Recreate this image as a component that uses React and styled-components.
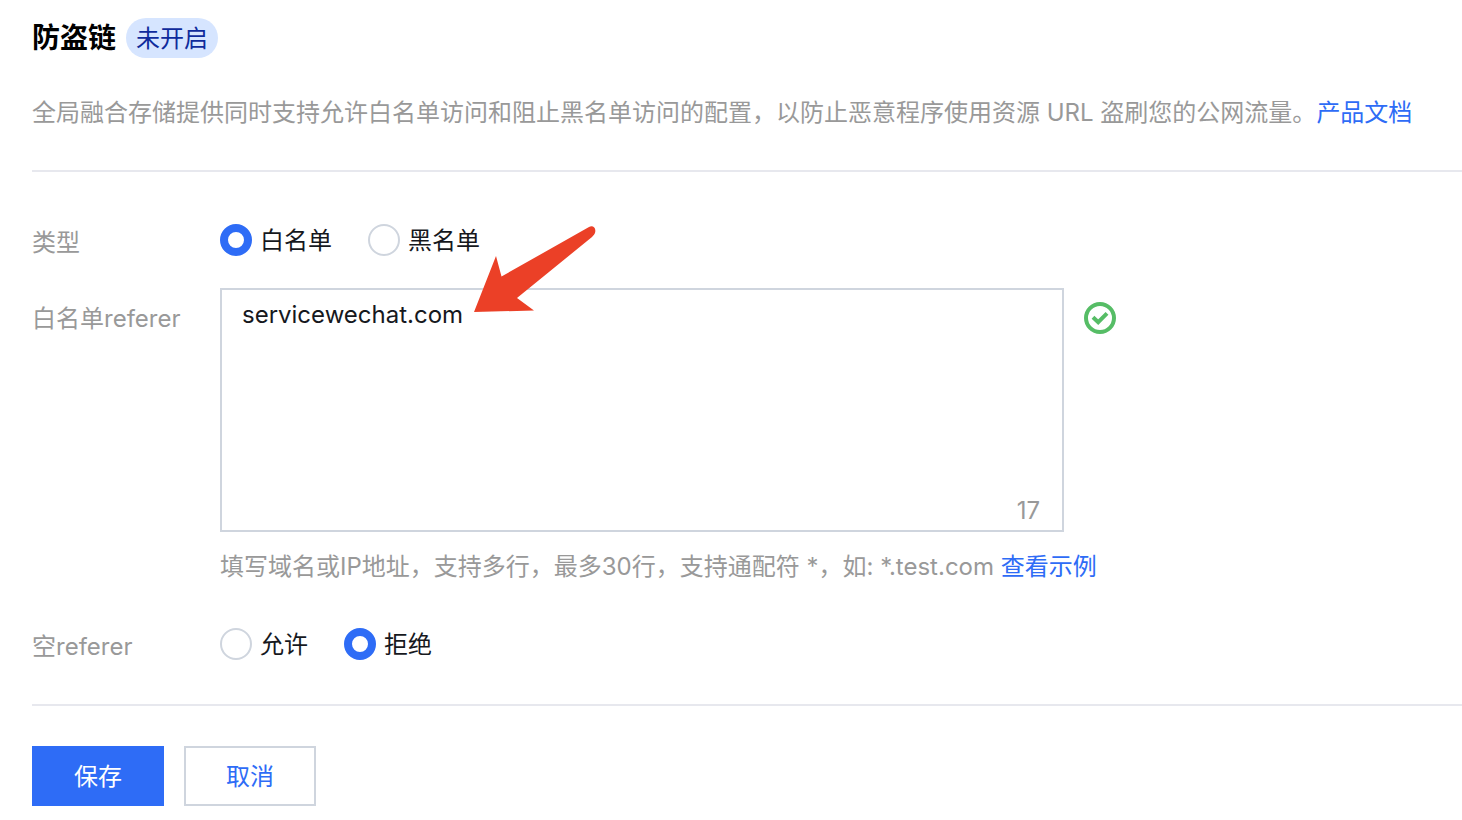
import React, { useState } from 'react';
import styled, { createGlobalStyle } from 'styled-components';

const GlobalStyle = createGlobalStyle`
  *, *::before, *::after { box-sizing: border-box; }
  body {
    margin: 0;
    background: #fff;
    color: #16181d;
    font-family: Inter, "Noto Sans CJK SC", sans-serif;
    font-size: 24px;
    line-height: 38px;
  }
`;

const Page = styled.main`
  padding: 18px 0 14px 32px;
`;

const Header = styled.header`
  display: flex;
  align-items: center;
  gap: 10px;
`;

const Title = styled.h1`
  margin: 0;
  font-size: 28px;
  line-height: 40px;
  font-weight: 700;
  color: #000;
`;

const Badge = styled.span`
  padding: 2px 10px 0;
  border-radius: 20px;
  background: #d6e5ff;
  color: #0f2b9c;
`;

const Description = styled.p`
  margin: 36px 0 38px;
  color: #999;
`;

const Link = styled.a`
  color: #2e6cf6;
  text-decoration: none;
  &:hover { text-decoration: underline; }
`;

const Form = styled.form`
  margin: 0;
`;

const Fields = styled.div`
  display: flex;
  flex-direction: column;
  padding: 52px 0 38px;
  border: solid #e7e8ee;
  border-width: 2px 0;
`;

const Row = styled.div`
  display: grid;
  grid-template-columns: 188px minmax(0, 1fr);
  align-items: start;
  margin-top: ${(p) => p.$gap || 0}px;
`;

const Label = styled.label`
  padding-top: ${(p) => p.$inset || 0}px;
  color: #999;
`;

const RadioGroup = styled.div`
  display: flex;
  gap: 36px;
`;

const RadioLabel = styled.label`
  display: flex;
  align-items: flex-start;
  gap: 8px;
  line-height: 34px;
`;

const Radio = styled.input`
  appearance: none;
  flex: none;
  width: 32px;
  height: 32px;
  margin: 0;
  border: 2px solid #cfd5de;
  border-radius: 50%;
  background: #fff;
  &:checked { border: 8px solid #2e6cf6; }
`;

const FieldLine = styled.div`
  position: relative;
  display: flex;
  align-items: flex-start;
  gap: 20px;
`;

const EditorBox = styled.div`
  position: relative;
  flex: 0 1 844px;
`;

const Editor = styled.textarea`
  display: block;
  width: 100%;
  height: 244px;
  margin: 0;
  padding: 6px 20px;
  border: 2px solid #cfd5de;
  border-radius: 0;
  outline: none;
  resize: none;
  background: #fff;
  color: inherit;
  font: inherit;
`;

const Counter = styled.span`
  position: absolute;
  right: 24px;
  bottom: 2px;
  color: #999;
`;

const StatusIcon = styled.svg`
  flex: none;
  width: 32px;
  height: 32px;
  margin-top: 14px;
`;

const Pointer = styled.svg`
  position: absolute;
  left: 252px;
  top: -64px;
  width: 126px;
  height: 90px;
  pointer-events: none;
`;

const Hint = styled.p`
  margin: 16px 0 0;
  color: #999;
`;

const Actions = styled.div`
  display: flex;
  gap: 20px;
  margin-top: 40px;
`;

const Button = styled.button`
  width: 132px;
  height: 60px;
  padding: 2px 0 0;
  border: 2px solid ${(p) => (p.$primary ? '#2e6cf6' : '#cfd5de')};
  border-radius: 0;
  background: ${(p) => (p.$primary ? '#2e6cf6' : '#fff')};
  color: ${(p) => (p.$primary ? '#fff' : '#2e6cf6')};
  font: inherit;
  cursor: pointer;
`;

function RadioOptions({ name, labelledBy, options, value, onChange }) {
  return (
    <RadioGroup role="radiogroup" aria-labelledby={labelledBy}>
      {options.map((option) => (
        <RadioLabel key={option}>
          <Radio
            type="radio"
            name={name}
            value={option}
            checked={value === option}
            onChange={() => onChange(option)}
          />
          {option}
        </RadioLabel>
      ))}
    </RadioGroup>
  );
}

export default function App() {
  const [type, setType] = useState('白名单');
  const [empty, setEmpty] = useState('拒绝');
  const [referer, setReferer] = useState('servicewechat.com');

  return (
    <>
      <GlobalStyle />
      <Page>
        <Header>
          <Title>防盗链</Title>
          <Badge>未开启</Badge>
        </Header>
        <Description>
          全局融合存储提供同时支持允许白名单访问和阻止黑名单访问的配置，以防止恶意程序使用资源 URL 盗刷您的公网流量。
          <Link href="#docs">产品文档</Link>
        </Description>
        <Form onSubmit={(e) => e.preventDefault()}>
          <Fields>
            <Row>
              <Label as="span" id="type-label">类型</Label>
              <RadioOptions
                name="type"
                labelledBy="type-label"
                options={['白名单', '黑名单']}
                value={type}
                onChange={setType}
              />
            </Row>
            <Row $gap={26}>
              <Label htmlFor="referer" $inset={12}>白名单referer</Label>
              <div>
                <FieldLine>
                  <EditorBox>
                    <Editor
                      id="referer"
                      spellCheck={false}
                      value={referer}
                      onChange={(e) => setReferer(e.target.value)}
                    />
                    <Counter>{referer.length}</Counter>
                  </EditorBox>
                  <StatusIcon viewBox="0 0 32 32" fill="none" stroke="#56bd66" strokeWidth="4" aria-hidden="true">
                    <circle cx="16" cy="16" r="14" />
                    <path d="M9 15.2 14.2 20.2 23 11.4" />
                  </StatusIcon>
                  <Pointer viewBox="0 0 126 90" aria-hidden="true">
                    <path
                      fill="#eb4027"
                      d="M2 88 24 32 29.500 52.500 117 3C121 1 124.500 4 123 9Q122.500 10.500 120 13L45 74 62 86.500Z"
                    />
                  </Pointer>
                </FieldLine>
                <Hint>
                  填写域名或IP地址，支持多行，最多30行，支持通配符 *，如: *.test.com{' '}
                  <Link href="#example">查看示例</Link>
                </Hint>
              </div>
            </Row>
            <Row $gap={42}>
              <Label as="span" id="empty-label">空referer</Label>
              <RadioOptions
                name="empty"
                labelledBy="empty-label"
                options={['允许', '拒绝']}
                value={empty}
                onChange={setEmpty}
              />
            </Row>
          </Fields>
          <Actions>
            <Button type="submit" $primary>保存</Button>
            <Button type="button">取消</Button>
          </Actions>
        </Form>
      </Page>
    </>
  );
}
